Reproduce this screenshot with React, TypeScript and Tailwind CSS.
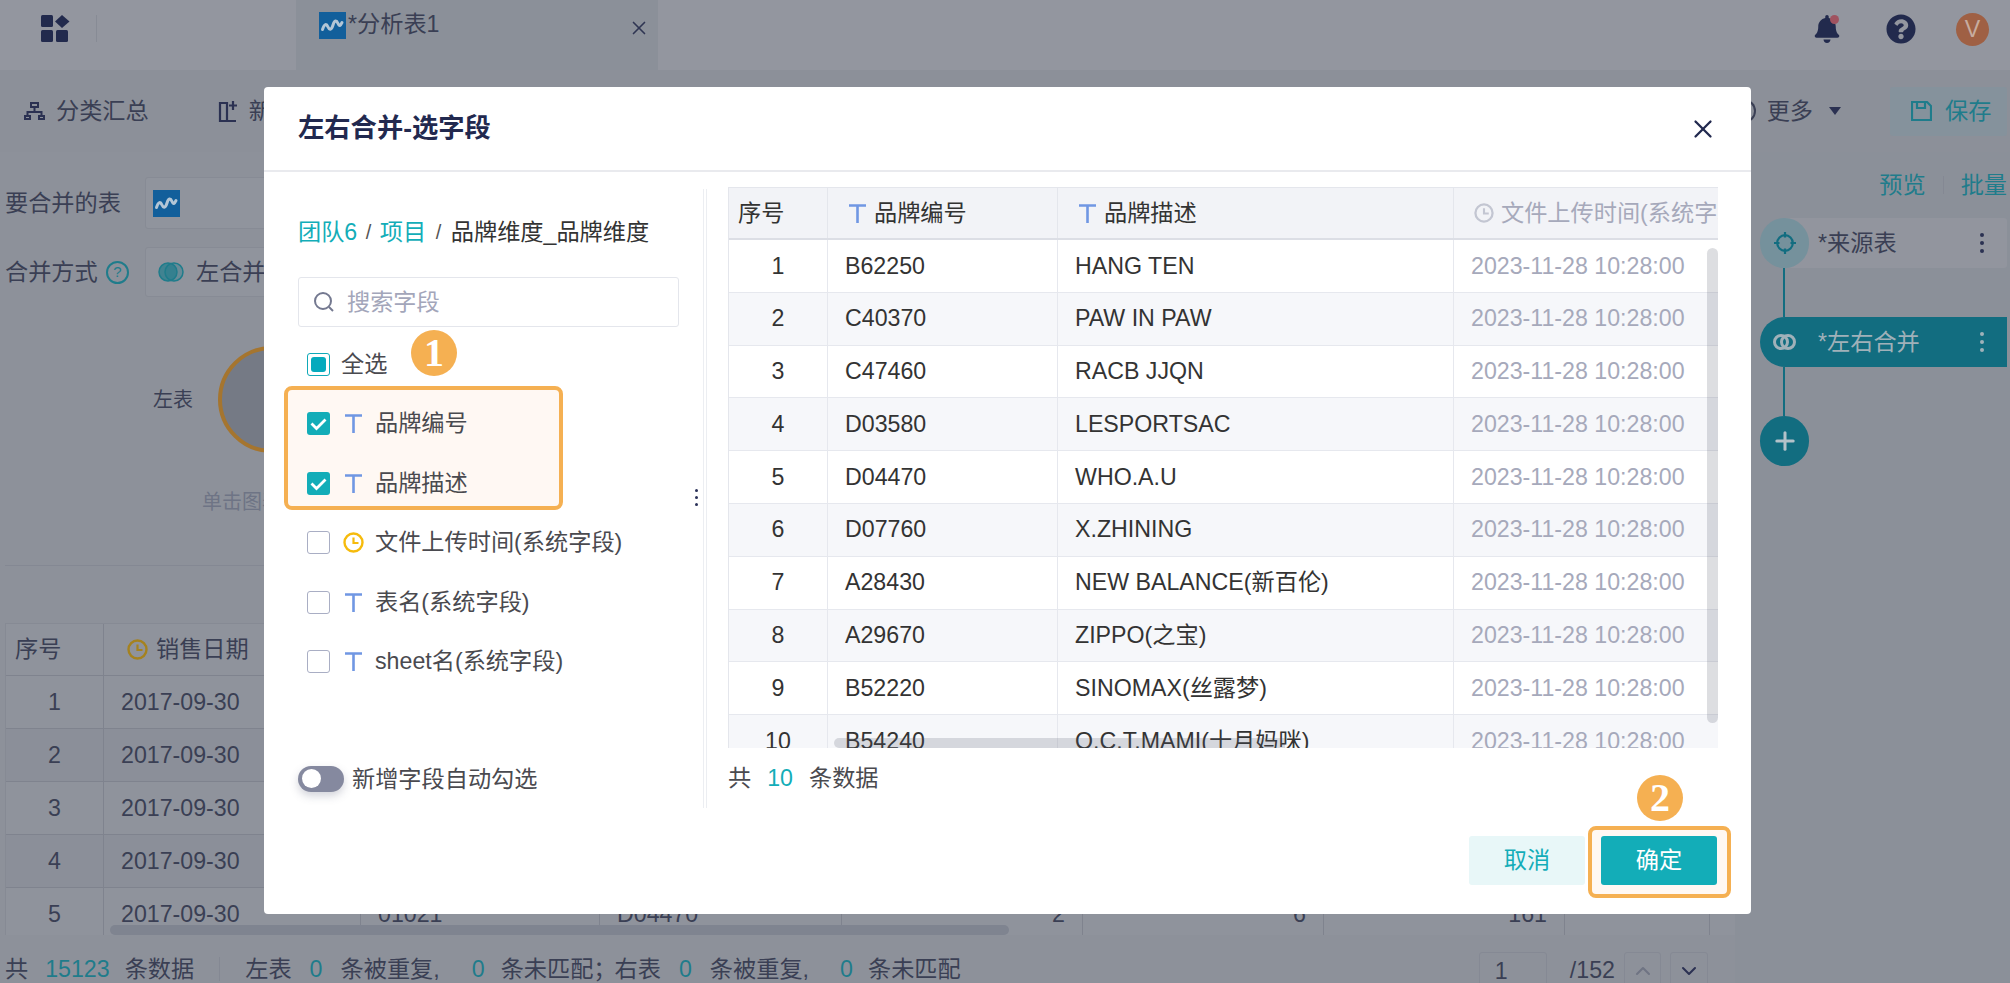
import React from 'react';
import { FaBell, FaQuestionCircle } from 'react-icons/fa';
import { ChevronDown, ChevronUp, Plus, X } from 'lucide-react';

const BRANDS = [
  ['B62250', 'HANG TEN'],
  ['C40370', 'PAW IN PAW'],
  ['C47460', 'RACB JJQN'],
  ['D03580', 'LESPORTSAC'],
  ['D04470', 'WHO.A.U'],
  ['D07760', 'X.ZHINING'],
  ['A28430', 'NEW BALANCE(新百伦)'],
  ['A29670', 'ZIPPO(之宝)'],
  ['B52220', 'SINOMAX(丝露梦)'],
  ['B54240', 'O.C.T.MAMI(十月妈咪)'],
];

const FIELDS = [
  { label: '文件上传时间(系统字段)', icon: 'clock' },
  { label: '表名(系统字段)', icon: 'text' },
  { label: 'sheet名(系统字段)', icon: 'text' },
];

// columns of the table behind the dialog, after the index column
const BG_COLUMNS = [
  { width: 'w-[257px]', value: '2017-09-30', right: false },
  { width: 'w-[239px]', value: '01021', right: false },
  { width: 'w-[242px]', value: 'D04470', right: false },
  { width: 'w-[241px]', value: '2', right: true },
  { width: 'w-[241px]', value: '6', right: true },
  { width: 'w-[241px]', value: '161', right: true },
  { width: 'w-[145px]', value: '', right: false },
];

const TextIcon = () => (
  <svg viewBox="0 0 17 19" className="w-[17px] h-[19px] shrink-0">
    <path d="M0 1.500h17M8.500 1.500V19" fill="none" stroke="#7097e3" strokeWidth="2.600" />
  </svg>
);

const ClockIcon = ({ color, size }: { color: string; size: number }) => (
  <svg viewBox="0 0 21 21" width={size} height={size} className="shrink-0">
    <circle cx="10.500" cy="10.500" r="9" fill="none" stroke={color} strokeWidth="2.400" />
    <path d="M10.500 5.500v5.500h5" fill="none" stroke={color} strokeWidth="2.200" />
  </svg>
);

const TableIcon = () => (
  <svg viewBox="0 0 27 27" className="w-[27px] h-[27px] shrink-0">
    <rect width="27" height="27" fill="#125f9b" />
    <path d="M3.500 17.500c2-6 4-6 5.500-2.500s3.500 3 5-2 3.500-5 5-1.500 2.500 2 4-1" fill="none" stroke="#b3c6d6" strokeWidth="3" strokeLinecap="round" />
  </svg>
);

const Dots = ({ color }: { color: string }) => (
  <div className="flex flex-col gap-[4px]">
    <span className={`w-[4px] h-[4px] rounded-full ${color}`} />
    <span className={`w-[4px] h-[4px] rounded-full ${color}`} />
    <span className={`w-[4px] h-[4px] rounded-full ${color}`} />
  </div>
);

const CheckBox = ({ checked }: { checked?: boolean }) =>
  checked ? (
    <span className="w-[23px] h-[23px] rounded-[3px] bg-[#13adb8] flex items-center justify-center shrink-0">
      <svg viewBox="0 0 23 23" className="w-[23px] h-[23px]">
        <path d="M4.500 11.500l5 5 9-9" fill="none" stroke="#fff" strokeWidth="2.800" />
      </svg>
    </span>
  ) : (
    <span className="w-[23px] h-[23px] rounded-[3px] border border-[#a9aec4] bg-white shrink-0" />
  );

const Bubble = ({ n, className }: { n: string; className: string }) => (
  <div className={`absolute w-[46px] h-[46px] rounded-full bg-[#f5b052] text-white flex items-center justify-center font-['Liberation_Serif',serif] font-bold text-[40px] ${className}`}>
    {n}
  </div>
);

const FieldRow = ({ label, icon, checked }: { label: string; icon: string; checked?: boolean }) => (
  <div className="h-[59.500px] flex items-center text-[#4a4a4f]">
    <CheckBox checked={checked} />
    <span className="w-[21px] ml-[13px] mr-[11px] flex justify-center">
      {icon === 'clock' ? <ClockIcon color="#f6bb0c" size={21} /> : <TextIcon />}
    </span>
    <span className="whitespace-nowrap">{label}</span>
  </div>
);

const PreviewTable = () => (
  <div className="relative w-[990px] h-[561px] overflow-hidden border-l border-t border-[#e4e6ec] text-[#333]">
    <div className="flex h-[52px] bg-[#f2f3f7] border-b-2 border-[#dcdee5] whitespace-nowrap">
      <div className="w-[99px] pl-[9px] flex items-center border-r border-[#e4e6ec]">序号</div>
      <div className="w-[230px] pl-[21px] flex items-center gap-[8px] border-r border-[#e4e6ec]"><TextIcon />品牌编号</div>
      <div className="w-[396px] pl-[21px] flex items-center gap-[8px] border-r border-[#e4e6ec]"><TextIcon />品牌描述</div>
      <div className="flex-1 pl-[20px] flex items-center gap-[7px] text-[#a6a9bb] overflow-hidden">
        <ClockIcon color="#c3c6d2" size={20} />文件上传时间(系统字段)
      </div>
    </div>
    {BRANDS.map(([code, name], i) => (
      <div key={code} className={`flex h-[52.800px] border-b border-[#e6e8ee] whitespace-nowrap ${i % 2 ? 'bg-[#f6f7fa]' : 'bg-white'}`}>
        <div className="w-[99px] flex items-center justify-center border-r border-[#e6e8ee]">{i + 1}</div>
        <div className="w-[230px] pl-[17px] flex items-center border-r border-[#e6e8ee]">{code}</div>
        <div className="w-[396px] pl-[17px] flex items-center border-r border-[#e6e8ee]">{name}</div>
        <div className="flex-1 pl-[17px] flex items-center text-[#a6a9bb]">2023-11-28 10:28:00</div>
      </div>
    ))}
    <div className="absolute right-0 top-[60px] w-[11px] h-[475px] rounded-full bg-[#55586a]/20" />
    <div className="absolute left-[105px] bottom-0 w-[451px] h-[10px] rounded-l-full bg-[#55586a]/20" />
  </div>
);

const Modal = () => (
  <div className="absolute left-[264px] top-[87px] w-[1487px] h-[827px] bg-white rounded-[4px] flex flex-col text-[23.200px]">
    <div className="h-[85px] shrink-0 flex items-center justify-between pl-[34px] pr-[33px] border-b-2 border-[#e9eaee]">
      <h2 className="text-[26.300px] font-bold text-[#22294f]">左右合并-选字段</h2>
      <X className="w-[30px] h-[30px] text-[#22294f]" strokeWidth={1.800} />
    </div>

    <div className="flex h-[636px] shrink-0">
      <div className="relative w-[439px] pl-[34px] shrink-0">
        <div className="mt-[45px] h-[30px] flex items-center whitespace-nowrap text-[#333]">
          <span className="text-[#13adb8]">团队6</span>
          <span className="mx-[8.500px] text-[20px] text-[#555]">/</span>
          <span className="text-[#13adb8]">项目</span>
          <span className="mx-[9.500px] text-[20px] text-[#555]">/</span>
          <span>品牌维度_品牌维度</span>
        </div>
        <div className="mt-[30px] w-[381px] h-[50px] rounded-[3px] border border-[#e4e6ec] flex items-center pl-[14px] gap-[12px] text-[#a3a6ba]">
          <svg viewBox="0 0 22 22" className="w-[22px] h-[22px] shrink-0">
            <circle cx="10" cy="10" r="8" fill="none" stroke="#747990" strokeWidth="2" />
            <path d="M16 16l4 4" stroke="#747990" strokeWidth="2" />
          </svg>
          搜索字段
        </div>
        <div className="mt-[15px] h-[44px] ml-[9px] flex items-center gap-[11px] text-[#4a4a4f]">
          <span className="w-[23px] h-[23px] rounded-[3px] border border-[#0fa9b8] bg-white flex items-center justify-center shrink-0">
            <span className="w-[15px] h-[15px] rounded-[3px] bg-[#05aabd]" />
          </span>
          全选
        </div>
        <div className="-ml-[14px] w-[279px] h-[124px] mb-[3px] rounded-[8px] border-4 border-[#f5b052] bg-[#fff8f3] pt-[4px] pl-[19px]">
          <FieldRow label="品牌编号" icon="text" checked />
          <FieldRow label="品牌描述" icon="text" checked />
        </div>
        <div className="ml-[9px]">
          {FIELDS.map((f) => (
            <FieldRow key={f.label} label={f.label} icon={f.icon} />
          ))}
        </div>
        <div className="mt-[70px] flex items-center gap-[8px] text-[#4a4a4f]">
          <span className="w-[46px] h-[26px] rounded-full bg-[#85899f] flex items-center pl-[4px] shadow-[0_4px_8px_rgba(80,85,110,0.25)]">
            <span className="w-[19px] h-[19px] rounded-full bg-white" />
          </span>
          新增字段自动勾选
        </div>
        <Bubble n="1" className="left-[147px] top-[158px]" />
        <div className="absolute left-[431px] top-[317px] flex flex-col gap-[4px]">
          <span className="w-[3px] h-[3px] rounded-full bg-[#2a3158]" />
          <span className="w-[3px] h-[3px] rounded-full bg-[#2a3158]" />
          <span className="w-[3px] h-[3px] rounded-full bg-[#2a3158]" />
        </div>
      </div>

      <div className="w-[4px] shrink-0 mt-[17px] border-x border-[#eceef2]" />

      <div className="pl-[21px] pt-[15px]">
        <PreviewTable />
        <div className="mt-[15px] h-[30px] flex items-center gap-[16px] text-[#4a4a4f]">
          共 <span className="text-[#13adb8]">10</span> 条数据
        </div>
      </div>
    </div>

    <div className="flex-1 flex justify-end items-start pt-[28px] pr-[34px] gap-[16px]">
      <button className="w-[116px] h-[49px] rounded-[3px] bg-[#e8f7f8] text-[#13adb8]">取消</button>
      <div className="relative w-[116px] h-[49px]">
        <span className="absolute -left-[13px] -top-[10px] w-[143px] h-[72px] rounded-[8px] border-4 border-[#f5b052] bg-[#fff8f3]" />
        <button className="relative w-full h-full rounded-[3px] bg-[#13adb8] text-white">确定</button>
        <Bubble n="2" className="left-[36px] -top-[61px]" />
      </div>
    </div>
  </div>
);

export default function App() {
  return (
    <div className="relative w-[2010px] h-[983px] overflow-hidden bg-[#8c9099] text-[23.200px] text-[#3a3f54] font-['Liberation_Sans','Noto_Sans_CJK_SC',sans-serif]">
      <div className="h-[70px] flex bg-[#93969f]">
        <div className="w-[296px] pl-[41px] pt-[15px] flex items-start">
          <svg viewBox="0 0 29 27" className="w-[29px] h-[27px]">
            <rect width="12" height="12" rx="1.500" fill="#222a4d" />
            <path d="M21 0l7.500 6.500L21 13l-7-6.500z" fill="#222a4d" />
            <rect y="15" width="12" height="12" rx="1.500" fill="#222a4d" />
            <rect x="15" y="15" width="12" height="12" rx="1.500" fill="#222a4d" />
          </svg>
          <span className="ml-[26px] w-px h-[27px] bg-[#878b95]" />
        </div>
        <div className="w-[362px] bg-[#8b9099] relative flex items-start pl-[23px] pt-[12px]">
          <TableIcon />
          <span className="ml-[2px] leading-[24px] whitespace-nowrap">*分析表1</span>
          <X className="absolute right-[8px] top-[17px] w-[22px] h-[22px] text-[#2f3553]" strokeWidth={1.800} />
        </div>
        <div className="flex-1 flex items-center justify-end pr-[21px] pb-[12px]">
          <span className="relative mr-[46px]">
            <FaBell className="w-[26px] h-[28px] text-[#222a4d]" />
            <span className="absolute right-[1px] top-0 w-[9px] h-[9px] rounded-full bg-[#a0525f]" />
          </span>
          <FaQuestionCircle className="w-[30px] h-[30px] mr-[40px] text-[#222a4d]" />
          <span className="w-[33px] h-[33px] rounded-full bg-[#9f6044] text-[#c7ac9f] flex items-center justify-center">V</span>
        </div>
      </div>

      <div className="h-[82px] flex items-center bg-[#8c9099]">
        <svg viewBox="0 0 21 18" className="ml-[24px] w-[21px] h-[18px]">
          <path d="M7 1h7v4H7zM10.500 5v5M3.500 15v-5h14v5M1 14h5v3H1zM15 14h5v3h-5z" fill="none" stroke="#2b3152" strokeWidth="2" />
        </svg>
        <span className="ml-[11px]">分类汇总</span>
        <svg viewBox="0 0 20 24" className="ml-[69px] w-[20px] h-[24px]">
          <path d="M2 4h7v18H2zM9 22h9M15 2v9M11 6.500h8" fill="none" stroke="#2b3152" strokeWidth="2.200" />
        </svg>
        <span className="ml-[11px]">新</span>
        <span className="ml-auto w-[12px] h-[24px] rounded-r-full border-2 border-l-0 border-[#3a3f54]" />
        <span className="ml-[11px]">更多</span>
        <svg viewBox="0 0 12 8" className="ml-[16px] w-[12px] h-[8px]">
          <path d="M0 0h12L6 8z" fill="#2b3152" />
        </svg>
        <div className="ml-[49px] mr-[3px] w-[117px] h-[49px] rounded-[3px] bg-[#85929c] text-[#1f7c8b] flex items-center pl-[21px] gap-[13px]">
          <svg viewBox="0 0 21 20" className="w-[21px] h-[20px]">
            <path d="M1 1h15l4 4v14H1zM6 1v6h8V1" fill="none" stroke="#1f7c8b" strokeWidth="2.200" />
          </svg>
          保存
        </div>
      </div>

      <div className="flex h-[831px]">
        <div className="relative w-[1735px] shrink-0 bg-[#8d919a]">
          <div className="mt-[25px] h-[52px] flex items-center pl-[5px]">
            <span className="w-[140px]">要合并的表</span>
            <div className="w-[400px] h-[52px] rounded-[3px] bg-[#90949d] border border-[#878b95] flex items-center pl-[7px]">
              <TableIcon />
            </div>
          </div>
          <div className="mt-[18px] h-[50px] flex items-center pl-[5px]">
            <span className="w-[101px]">合并方式</span>
            <span className="w-[23px] h-[23px] rounded-full border-2 border-[#1f7c8b] text-[#1f7c8b] text-[15px] flex items-center justify-center">?</span>
            <span className="w-[16px]" />
            <div className="w-[400px] h-[50px] rounded-[3px] bg-[#90949d] border border-[#878b95] flex items-center pl-[12px] gap-[12px]">
              <svg viewBox="0 0 26 22" className="w-[26px] h-[22px] shrink-0">
                <circle cx="10" cy="11" r="9" fill="#1f7c8b" fillOpacity="0.7" stroke="#1f7c8b" strokeWidth="1.500" />
                <circle cx="16" cy="11" r="9" fill="#1f7c8b" fillOpacity="0.35" stroke="#1f7c8b" strokeWidth="1.500" />
              </svg>
              左合并
            </div>
          </div>
          <div className="mt-[49px] h-[107px] flex items-center pl-[153px] text-[20px]">
            <span className="w-[65px]">左表</span>
            <span className="w-[107px] h-[107px] rounded-full border-4 border-[#a5752f] bg-[#757a85]" />
          </div>
          <div className="mt-[36px] ml-[202px] h-[26px] leading-[26px] text-[20px] text-[#6e7485]">单击图表</div>
          <div className="mt-[50px] ml-[5px] h-px bg-[#848893]" />

          <div className="relative mt-[57px] ml-[5px] h-[312px] overflow-hidden border-l border-[#868a94]">
            <div className="flex h-[53px] bg-[#8f939c] border-b border-[#7f838e] border-t border-t-[#868a94]">
              <div className="w-[98px] pl-[9px] flex items-center border-r border-[#7f838e]">序号</div>
              <div className="w-[257px] pl-[23px] flex items-center gap-[8px]">
                <ClockIcon color="#a5821f" size={21} />销售日期
              </div>
            </div>
            {[1, 2, 3, 4, 5].map((n) => (
              <div key={n} className={`flex h-[53px] border-b border-[#7f838e] whitespace-nowrap ${n % 2 ? 'bg-[#8f939c]' : 'bg-[#8b8f99]'}`}>
                <div className="w-[98px] flex items-center justify-center border-r border-[#7f838e]">{n}</div>
                {BG_COLUMNS.map((col, c) => (
                  <div key={c} className={`${col.width} flex items-center border-r border-[#7f838e] ${col.right ? 'justify-end pr-[17px]' : 'pl-[17px]'}`}>
                    {col.value}
                  </div>
                ))}
              </div>
            ))}
            <div className="absolute left-[104px] bottom-0 w-[899px] h-[10px] rounded-full bg-[#7f8490]" />
          </div>

          <div className="mt-[17px] h-[34px] pl-[5px] flex items-center whitespace-nowrap">
            <span>共</span>
            <span className="ml-[17px] text-[#1f7c8b]">15123</span>
            <span className="ml-[15px]">条数据</span>
            <span className="ml-[25px] w-px h-[24px] bg-[#848893]" />
            <span className="ml-[25px]">左表</span>
            <span className="ml-[18px] text-[#1f7c8b]">0</span>
            <span className="ml-[18px]">条被重复,</span>
            <span className="ml-[32px] text-[#1f7c8b]">0</span>
            <span className="ml-[16px]">条未匹配；</span>
            <span className="-ml-[2px]">右表</span>
            <span className="ml-[18px] text-[#1f7c8b]">0</span>
            <span className="ml-[18px]">条被重复,</span>
            <span className="ml-[31px] text-[#1f7c8b]">0</span>
            <span className="ml-[15px]">条未匹配</span>
            <div className="ml-auto flex items-start pr-[27px] self-start">
              <span className="w-[68px] h-[40px] border border-[#858994] rounded-[3px] pl-[15px] pt-[1px]">1</span>
              <span className="ml-[23px] pt-[1px]">/152</span>
              <span className="ml-[9px] w-[37px] h-[40px] border border-[#858994] rounded-[3px] flex justify-center pt-[6px]">
                <ChevronUp className="w-[24px] h-[24px] text-[#6f7483]" strokeWidth={2} />
              </span>
              <span className="ml-[9px] w-[38px] h-[40px] border border-[#858994] rounded-[3px] flex justify-center pt-[6px]">
                <ChevronDown className="w-[24px] h-[24px] text-[#2b3152]" strokeWidth={2} />
              </span>
            </div>
          </div>
        </div>

        <div className="flex-1 bg-[#8b9099]">
          <div className="mt-[18px] h-[30px] pr-[3px] flex items-center justify-end text-[#1f7c8b]">
            预览
            <span className="mx-[17px] w-px h-[18px] bg-[#848893]" />
            批量
          </div>
          <div className="mt-[18px] ml-[25px] w-[247px] flex flex-col">
            <div className="flex h-[50px]">
              <span className="relative w-[49px] h-[50px] rounded-full bg-[#75919c] flex items-center justify-center shrink-0">
                <svg viewBox="0 0 24 24" className="w-[22px] h-[22px]">
                  <circle cx="12" cy="12" r="8.500" fill="none" stroke="#126d80" strokeWidth="2.400" />
                  <path d="M12 0v6M12 18v6M0 12h6M18 12h6" stroke="#126d80" strokeWidth="2.400" />
                </svg>
              </span>
              <div className="flex-1 -ml-[25px] pl-[34px] pr-[23px] bg-[#92959e] rounded-r-[3px] flex items-center justify-between">
                *来源表
                <Dots color="bg-[#2b3152]" />
              </div>
            </div>
            <span className="ml-[23px] w-[2px] h-[49px] bg-[#126d80]" />
            <div className="h-[50px] rounded-l-full rounded-r-[3px] bg-[#126d80] text-[#a0b1b9] flex items-center pl-[13px] pr-[23px]">
              <svg viewBox="0 0 23 16" className="w-[23px] h-[16px] shrink-0">
                <circle cx="8" cy="8" r="6.500" fill="none" stroke="#a0b1b9" strokeWidth="3" />
                <circle cx="15" cy="8" r="6.500" fill="none" stroke="#a0b1b9" strokeWidth="3" />
              </svg>
              <span className="ml-[22px] flex-1">*左右合并</span>
              <Dots color="bg-[#a0b1b9]" />
            </div>
            <span className="ml-[23px] w-[2px] h-[49px] bg-[#126d80]" />
            <span className="w-[49px] h-[50px] rounded-full bg-[#126d80] flex items-center justify-center">
              <Plus className="w-[28px] h-[28px] text-[#b4c2c9]" strokeWidth={2.600} />
            </span>
          </div>
        </div>
      </div>

      <Modal />
    </div>
  );
}
